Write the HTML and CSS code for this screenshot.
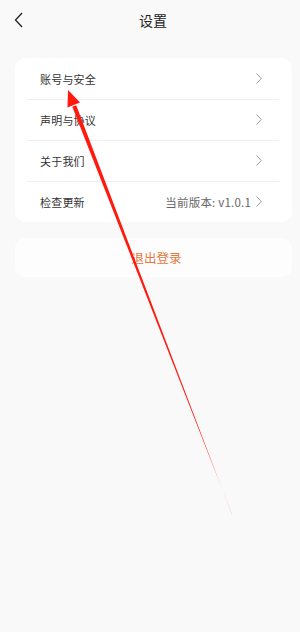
FILE: index.html
```html
<!DOCTYPE html>
<html lang="zh-CN">
<head>
    <meta charset="UTF-8">
    <meta name="viewport" content="width=device-width, initial-scale=1.0">
    <title>设置</title>
    <link rel="stylesheet" href="styles.css">
</head>
<body>
    <div class="header">
        <svg class="back" width="10" height="16" viewBox="0 0 10 16">
            <path d="M8 1 L1.5 8 L8 15" fill="none" stroke="#222" stroke-width="1.3"/>
        </svg>
        <h1>设置</h1>
    </div>

    <div class="card">
        <div class="row">
            <span class="label">账号与安全</span>
            <svg class="chev" width="6" height="11" viewBox="0 0 6 11"><path d="M0.5 0.5 L5.3 5.5 L0.5 10.5" fill="none" stroke="#9a9a9a" stroke-width="1"/></svg>
        </div>
        <div class="row">
            <span class="label">声明与协议</span>
            <svg class="chev" width="6" height="11" viewBox="0 0 6 11"><path d="M0.5 0.5 L5.3 5.5 L0.5 10.5" fill="none" stroke="#9a9a9a" stroke-width="1"/></svg>
        </div>
        <div class="row">
            <span class="label">关于我们</span>
            <svg class="chev" width="6" height="11" viewBox="0 0 6 11"><path d="M0.5 0.5 L5.3 5.5 L0.5 10.5" fill="none" stroke="#9a9a9a" stroke-width="1"/></svg>
        </div>
        <div class="row">
            <span class="label">检查更新</span>
            <span class="value">当前版本: v1.0.1</span>
            <svg class="chev" width="6" height="11" viewBox="0 0 6 11"><path d="M0.5 0.5 L5.3 5.5 L0.5 10.5" fill="none" stroke="#9a9a9a" stroke-width="1"/></svg>
        </div>
    </div>

    <div class="logout">退出登录</div>

    <!-- annotation arrow -->
    <svg class="arrow" width="300" height="632" viewBox="0 0 300 632">
        <defs>
            <linearGradient id="fade" x1="68" y1="90" x2="232" y2="515" gradientUnits="userSpaceOnUse">
                <stop offset="0" stop-color="#ff1a0d"/>
                <stop offset="0.88" stop-color="#ff1a0d"/>
                <stop offset="1" stop-color="#ff1a0d" stop-opacity="0.3"/>
            </linearGradient>
        </defs>
        <polygon points="76.2,105.3 72.3,106.7 232.3,515 232,515" fill="url(#fade)"/>
        <polygon points="68,90 80,102.5 67.5,107.5" fill="#ff1a0d"/>
    </svg>
</body>
</html>
```

FILE: styles.css
```css
body {
    margin: 0;
    background-color: #f9f9f9;
    font-family: "Noto Sans CJK SC", "Noto Sans", sans-serif;
    width: 300px;
    height: 632px;
    position: relative;
    overflow: hidden;
}
.header {
    height: 40px;
    display: flex;
    align-items: center;
    justify-content: center;
    position: relative;
}
.header h1 {
    margin: 0;
    font-size: 14px;
    font-weight: normal;
    color: #222;
    padding-left: 6px;
}
.back {
    position: absolute;
    left: 14px;
    top: 12px;
}
.card {
    background: #fff;
    margin: 18px 8px 0 15px;
    border-radius: 10px;
}
.row {
    height: 41px;
    display: flex;
    align-items: center;
    padding: 0 30px 0 25px;
    position: relative;
}
.row + .row::before {
    content: "";
    position: absolute;
    top: 0;
    left: 12px;
    right: 13px;
    border-top: 1px solid #efefef;
}
.label {
    flex: 1;
    font-size: 11px;
    letter-spacing: 0.2px;
    color: #333;
}
.value {
    font-size: 11.5px;
    letter-spacing: 0.2px;
    color: #666;
    margin-right: 5px;
}
.chev {
    display: block;
}
.logout {
    margin: 16px 8px 0 15px;
    height: 39px;
    background: #fdfdfd;
    border-radius: 10px;
    display: flex;
    align-items: center;
    justify-content: center;
    font-size: 12.5px;
    color: #e5773f;
    padding-left: 6px;
}
.arrow {
    position: absolute;
    left: 0;
    top: 0;
    pointer-events: none;
}
```
